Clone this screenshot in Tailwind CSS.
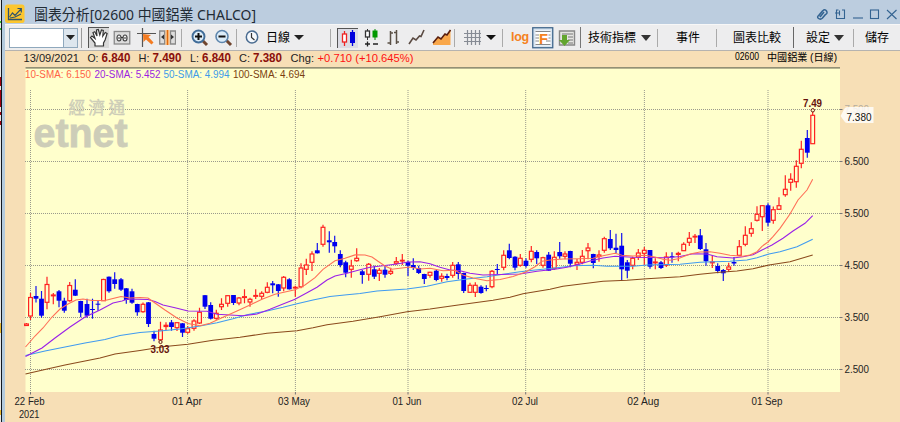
<!DOCTYPE html>
<html lang="zh-Hant">
<head>
  <meta charset="UTF-8">
  <meta name="viewport" content="width=device-width, initial-scale=1.0">
  <title>圖表分析[02600 中國鋁業 CHALCO]</title>
  <script src="https://cdn.jsdelivr.net/npm/@tailwindcss/browser@4"></script>
</head>
<body class="w-[900px] h-[422px] overflow-hidden flex bg-[#bccddf] font-['Liberation_Sans','Noto_Sans_CJK_TC',sans-serif] text-[#1c1c1c]">
  <!-- Edge of the window behind -->
  <div class="w-[5px] h-full shrink-0 flex">
    <svg class="w-[2px] h-full" viewBox="0 0 2 422">
      <rect width="2" height="422" fill="#e8e8e8"/>
      <path d="M0 22h1M0 29h1" stroke="#30c030" stroke-width="2"/>
      <path d="M0 77v9M0 90v17M0 112v3M0 121v4" stroke="#a00010" stroke-width="2"/>
      <path d="M0 323v10M0 410v5" stroke="#e8b830" stroke-width="2"/>
      <rect x="1" width="1" height="422" fill="#111820"/>
    </svg>
    <div class="w-[3px] bg-[#b3cadd]"></div>
  </div>

  <main class="flex-1 min-w-0 flex flex-col">
    <!-- Title bar -->
    <header class="h-[24px] shrink-0 flex items-center bg-[#bccddf]">
      <svg class="w-5 h-5 shrink-0 mt-[3px]" viewBox="0 0 20 20">
        <rect x="0" y="0.5" width="19.5" height="18.5" rx="2.5" fill="#fcc62e"/>
        <path d="M3.500 4v11.500H17" fill="none" stroke="#31536b" stroke-width="1.300"/>
        <path d="M4.500 13l3-4 2.500 2.500 6-6.500M12.500 4.500h3.800v4M5 14l5-1 6-3" fill="none" stroke="#31536b" stroke-width="1.200"/>
      </svg>
      <h1 class="ml-[10px] w-[226px] h-6">
        <svg class="w-[226px] h-6 block" viewBox="0 0 226 24"><text x="-1" y="19.500" font-size="14.500" textLength="222" lengthAdjust="spacingAndGlyphs" fill="#222b35" class="font-['Noto_Sans','Noto_Sans_CJK_TC',sans-serif]">圖表分析[02600 中國鋁業 CHALCO]</text></svg>
      </h1>
      <svg class="ml-auto mr-[2px] mt-[3px] w-[82px] h-5" viewBox="816 3 82 20" fill="none" stroke="#336391" stroke-width="1.100">
        <path d="M818.500 15l4-5q2.500-2.500 4 0t-1 3.500l-3 3.500q-2 2-4 .5t.5-3.500l3.500-4M820 16l4-5" stroke-width="1.500"/>
        <path d="M838.500 9h-2v8.500h8v-8.500h-2.500M835 12h5M839.500 9.500v5"/>
        <path d="M853 17h10"/>
        <rect x="870.500" y="9" width="8" height="8.500"/>
        <path d="M887 9l9.500 9M896.500 9l-9.500 9"/>
      </svg>
    </header>

    <!-- Toolbar -->
    <nav class="h-[27px] shrink-0 flex items-center bg-[#ededee] border-t border-[#f7f7f7] border-b border-b-[#b5b3b0] text-[12px] leading-none text-black whitespace-nowrap">
      <div class="ml-[4px] w-[69px] h-[20px] shrink-0 flex border border-[#8fa8bd] bg-white">
        <div class="w-[54px] border-r border-[#8fa8bd]"></div>
        <div class="flex-1 flex items-center justify-center bg-[#dde6ee]"><svg class="w-[9px] h-[5px]" viewBox="0 0 9 5"><path d="M0 0h9L4.500 5z" fill="#222"/></svg></div>
      </div>
      <div class="ml-[3px] w-px h-5 bg-[#999]"></div>

      <!-- hand -->
      <div class="ml-[6px] w-[21px] h-[21px] shrink-0 border-t border-l border-[#555] bg-[#d8d8d8]">
        <svg class="w-5 h-5" viewBox="0 0 20 20"><path d="M6 18v-3L1.500 9.500 3 8l3 2.500L4 4.500l1.800-.8L8 8 7.500 2 9.300 1.500 10.800 7 12.500 2l1.800.5-.5 5.500 2.500-3.500 1.800 1-2 6.500-1.600 3v3z" fill="#fff" stroke="#333" stroke-width="1.200"/></svg>
      </div>
      <svg class="ml-[4px] w-[18px] h-[16px] shrink-0" viewBox="0 0 18 16"><rect x="1.250" y="1.500" width="15.500" height="12.500" fill="#ddd" stroke="#8a8a8a" stroke-width="1.300"/><ellipse cx="6" cy="8" rx="2" ry="3" fill="#f4f4f4" stroke="#444" stroke-width="1.200"/><ellipse cx="12" cy="8" rx="2" ry="3" fill="#f4f4f4" stroke="#444" stroke-width="1.200"/><path d="M8 7.500h2M6 7v2M12 7v2" stroke="#333"/></svg>
      <svg class="ml-[6px] w-[19px] h-[20px] shrink-0" viewBox="0 0 19 20"><path d="M0 5.500h19M5.500 0v19" stroke="#555" stroke-width="1.200"/><path d="M6 6l8 1-2.500 2 5 5.500-2 2-5.500-5-2.500 2.500z" fill="#f47b20"/></svg>
      <svg class="ml-[3px] w-[17px] h-[17px] shrink-0" viewBox="0 0 17 17"><path d="M.7 2h5v13h-5zM11.500 2h5v13h-5z" fill="#ddd" stroke="#888" stroke-width="1.300"/><path d="M6.500 1h4v15h-4z" fill="#f7b36f"/><path d="M8.500 1v15" stroke="#e06a10"/><path d="M5 5.500v5l-3-2.500zM12 5.500v5l3-2.500z" fill="#333"/></svg>
      <div class="ml-[5px] w-px h-[18px] bg-[#aaa]"></div>

      <svg class="ml-[9px] w-[18px] h-[18px] shrink-0" viewBox="0 0 18 18"><path d="M11 11l5 5" stroke="#70452e" stroke-width="3"/><circle cx="7.500" cy="7.500" r="6" fill="#dcecf8" stroke="#416d99" stroke-width="1.900"/><path d="M4 7.500h7M7.500 4v7" stroke="#111" stroke-width="2"/></svg>
      <svg class="ml-[6px] w-[18px] h-[18px] shrink-0" viewBox="0 0 18 18"><path d="M11 11l5 5" stroke="#70452e" stroke-width="3"/><circle cx="7" cy="7.500" r="6" fill="#dcecf8" stroke="#5e86ad" stroke-width="1.600"/><path d="M3.500 7.500h7" stroke="#111" stroke-width="2"/></svg>
      <div class="ml-[3px] w-px h-[18px] bg-[#aaa]"></div>
      <svg class="ml-[8px] w-[14px] h-[15px] shrink-0" viewBox="0 0 14 15"><ellipse cx="7" cy="7" rx="5.700" ry="6" fill="#f5f8fc" stroke="#4a6c91" stroke-width="1.500"/><path d="M6.500 3v4.500l3 2.500" fill="none" stroke="#333" stroke-width="1.200"/></svg>
      <span class="ml-[7px] w-[24px]">日線</span>
      <svg class="ml-[4px] w-[10px] h-[5px] shrink-0" viewBox="0 0 10 5"><path d="M0 0h10L5 5z" fill="#222"/></svg>
      <div class="ml-[26px] w-px h-[18px] bg-[#aaa]"></div>

      <!-- chart types -->
      <div class="ml-[6px] w-[21px] h-[20px] shrink-0 border-t border-l border-[#555] bg-[#dcdce4]">
        <svg class="w-5 h-[19px]" viewBox="0 0 20 19"><path d="M6.500 2v15" stroke="#e22" stroke-width="1.300"/><rect x="4.500" y="5" width="4" height="8" fill="#fff" stroke="#e22" stroke-width="1.300"/><path d="M14.500 1v16" stroke="#00d" stroke-width="1.300"/><path d="M12 3h5v11h-5z" fill="#00d"/></svg>
      </div>
      <svg class="ml-[6px] w-[15px] h-[19px] shrink-0" viewBox="0 0 15 19"><path d="M3.500 1v11" stroke="#333"/><rect x="1.500" y="3" width="4" height="6" fill="#fff" stroke="#333" stroke-width="1.300"/><path d="M11 1v11" stroke="#080"/><path d="M8.500 2.500h5v7h-5z" fill="#090"/><path d="M1 16h5M3.500 13.500v5M9 16h5" stroke="#222" stroke-width="1.300"/></svg>
      <svg class="ml-[8px] w-[13px] h-[18px] shrink-0" viewBox="0 0 13 18"><path d="M3.500 2v14M.5 14h3M3.500 4h2.500M9.500 1v14M7 3.500h2.500M9.500 13H12" stroke="#5a5045" stroke-width="1.500"/></svg>
      <svg class="ml-[8px] w-[17px] h-[17px] shrink-0" viewBox="0 0 17 17"><path d="M1 15l4-6 3 2 3.500-4 1.500.5L16 1" fill="none" stroke="#5a4a42" stroke-width="1.600"/></svg>
      <svg class="ml-[7px] w-[19px] h-[17px] shrink-0" viewBox="0 0 19 17"><path d="M1 13l5-5 3 2 4-5 2 1 3.500-5v15H1z" fill="#f9a74a"/><path d="M1 14l5-6 3 2 4-5 2 1 3.500-5" fill="none" stroke="#5a2010" stroke-width="1.600"/></svg>
      <div class="ml-[3px] w-px h-[18px] bg-[#aaa]"></div>
      <svg class="ml-[9px] w-[17px] h-[17px] shrink-0" viewBox="0 0 17 17"><path d="M0 4.500h17M0 8.500h17M0 12.500h17M3.500 1v15M7.500 1v15M11.500 1v15M15.500 1v15" stroke="#868b94" stroke-width="1.200"/></svg>
      <svg class="ml-[5px] w-[10px] h-[5px] shrink-0" viewBox="0 0 10 5"><path d="M0 0h10L5 5z" fill="#111"/></svg>
      <div class="ml-[6px] w-px h-[18px] bg-[#aaa]"></div>
      <span class="ml-[8px] w-[19px] text-[12.5px] font-bold tracking-[-0.3px] text-[#f58220]">log</span>
      <svg class="ml-[2px] w-[22px] h-[22px] shrink-0" viewBox="0 0 22 22"><rect x=".75" y=".75" width="20" height="20" fill="#d8e4f0" stroke="#40678c" stroke-width="1.300"/><path d="M3.500 3.500h15v15h-15z" fill="#fff"/><path d="M3.500 4.500h15M3.500 8h3.500M3.500 11h3.500M3.500 14h3.500M3.500 17.500h15M16.500 8h2M16.500 11h2M14 14h4.500" stroke="#888"/><text x="7" y="16.500" font-size="15" font-weight="bold" fill="#f58220" textLength="9" lengthAdjust="spacingAndGlyphs">F</text></svg>
      <svg class="ml-[4px] w-[19px] h-[18px] shrink-0" viewBox="0 0 19 18"><path d="M1.500 2h15v14h-15z" fill="#e5e5e2" stroke="#888" stroke-width="1.400"/><path d="M4 5h11M10 8h5M10 11h5M10 14h5" stroke="#777"/><path d="M4 6h5v5h3l-5.500 6L1 11h3z" fill="#62a52e"/></svg>
      <div class="ml-[3px] w-px h-[21px] bg-[#777]"></div>

      <!-- menus -->
      <span class="ml-[7px] w-[49px]">技術指標</span>
      <svg class="ml-[4px] w-[10px] h-[6px] shrink-0" viewBox="0 0 10 6"><path d="M0 0h10L5 6z" fill="#333"/></svg>
      <div class="ml-[6px] w-px h-[18px] bg-[#aaa]"></div>
      <span class="ml-[18px] w-[24px]">事件</span>
      <div class="ml-[16px] w-px h-[18px] bg-[#aaa]"></div>
      <span class="ml-[16px] w-[48px]">圖表比較</span>
      <div class="ml-[12px] w-px h-[21px] bg-[#666]"></div>
      <span class="ml-[12px] w-[24px]">設定</span>
      <svg class="ml-[4px] w-[10px] h-[6px] shrink-0" viewBox="0 0 10 6"><path d="M0 0h10L5 6z" fill="#333"/></svg>
      <div class="ml-[9px] w-px h-[18px] bg-[#aaa]"></div>
      <span class="ml-[11px] w-[24px]">儲存</span>
    </nav>

    <!-- Chart: the viewBox keeps window coordinates -->
    <svg id="chart" class="w-[895px] h-[371px] shrink-0 block bg-[#f7dfb6]" viewBox="5 51 895 371" font-size="10.500">
      <rect x="25.500" y="67" width="814.500" height="325" fill="#ffffcc"/>
      <path d="M25.500 67.900H840" stroke="#6f6b59" stroke-width="1.300"/>

      <g font-size="11" fill="#222">
        <text x="23.500" y="62" textLength="55.500" lengthAdjust="spacingAndGlyphs">13/09/2021</text>
        <text x="87.500" y="62" textLength="11" lengthAdjust="spacingAndGlyphs">O:</text>
        <text x="138.500" y="62" textLength="11" lengthAdjust="spacingAndGlyphs">H:</text>
        <text x="190" y="62" textLength="9" lengthAdjust="spacingAndGlyphs">L:</text>
        <text x="239" y="62" textLength="11" lengthAdjust="spacingAndGlyphs">C:</text>
        <text x="290.500" y="62" textLength="23.500" lengthAdjust="spacingAndGlyphs">Chg:</text>
        <text x="317.500" y="62" fill="#f11" textLength="96" lengthAdjust="spacingAndGlyphs">+0.710 (+10.645%)</text>
        <g fill="#8b0f0b" font-weight="bold" font-size="12">
          <text x="101.500" y="62" textLength="29" lengthAdjust="spacingAndGlyphs">6.840</text>
          <text x="152.500" y="62" textLength="29" lengthAdjust="spacingAndGlyphs">7.490</text>
          <text x="202" y="62" textLength="29" lengthAdjust="spacingAndGlyphs">6.840</text>
          <text x="253" y="62" textLength="29" lengthAdjust="spacingAndGlyphs">7.380</text>
        </g>
        <g font-size="10" fill="#000">
          <text x="735" y="60" textLength="24" lengthAdjust="spacingAndGlyphs">02600</text>
          <text x="767" y="60.500" textLength="70" lengthAdjust="spacingAndGlyphs">中國鋁業 (日線)</text>
        </g>
      </g>
      <g font-size="10">
        <text x="25" y="77.500" fill="#ff6347" textLength="66" lengthAdjust="spacingAndGlyphs">10-SMA: 6.150</text>
        <text x="94.500" y="77.500" fill="#9a1fe0" textLength="66" lengthAdjust="spacingAndGlyphs">20-SMA: 5.452</text>
        <text x="163.500" y="77.500" fill="#409be8" textLength="66" lengthAdjust="spacingAndGlyphs">50-SMA: 4.994</text>
        <text x="233" y="77.500" fill="#7b3f10" textLength="72" lengthAdjust="spacingAndGlyphs">100-SMA: 4.694</text>
      </g>

      <g id="grid" stroke="#9a9a8c" stroke-width="1" stroke-dasharray="1 1"></g>

      <!-- etnet watermark -->
      <g fill="#cdcdb8">
        <text x="68.500" y="114" font-size="16.500" stroke="#cdcdb8" stroke-width=".4" textLength="56.500">經濟通</text>
        <text x="33.500" y="147.300" font-size="41" font-weight="bold" stroke="#cdcdb8" stroke-width=".8" textLength="94" lengthAdjust="spacingAndGlyphs">etnet</text>
      </g>

      <g id="candles"></g>
      <g id="averages" fill="none" stroke-width="1.100"></g>
      <g id="axis" fill="#222"></g>

      <text x="150.500" y="353" font-weight="bold" fill="#65120c" textLength="19" lengthAdjust="spacingAndGlyphs">3.03</text>
      <circle cx="160.500" cy="342" r="1.600" fill="#ffffcc" stroke="#65120c"/>
      <text x="803" y="107" font-weight="bold" fill="#65120c" textLength="19" lengthAdjust="spacingAndGlyphs">7.49</text>
      <circle cx="812.800" cy="110.300" r="1.700" fill="#ffffcc" stroke="#65120c"/>
      <path d="M840.500 116l4-7.500q1-1.500 3-1.500H873.500V123H847.500q-2 0-3-1.500z" fill="#fff" fill-opacity=".8"/>
      <text x="846.500" y="121" textLength="25" lengthAdjust="spacingAndGlyphs" fill="#111">7.380</text>
    </svg>
  </main>

  <script>
    const NS = "http://www.w3.org/2000/svg";

    function add(parent, tag, attrs, text) {
      const el = document.createElementNS(NS, tag);
      for (const k in attrs) el.setAttribute(k, attrs[k]);
      if (text) el.textContent = text;
      document.getElementById(parent).appendChild(el);
    }

    // [y, label]
    const prices = [[109.5, "7.500"], [161.5, "6.500"], [213.5, "5.500"], [265.5, "4.500"], [317.5, "3.500"], [369.5, "2.500"]];
    prices.forEach(([y, label]) => {
      add("grid", "path", { d: `M25 ${y}H840` });
      add("axis", "path", { d: `M840 ${y}h2.500`, stroke: "#777" });
      add("axis", "text", { x: 844.5, y: y + 3.5, textLength: 24.5, lengthAdjust: "spacingAndGlyphs", fill: label === "7.500" ? "#b5ada0" : "#222" }, label);
    });

    // [x, label, label x, width]
    const dates = [[30.5, "22 Feb", 14.5, 30], [187.6, "01 Apr", 172, 30], [295.4, "03 May", 278, 32], [408, "01 Jun", 392.5, 29], [525.7, "02 Jul", 512, 26], [644.4, "02 Aug", 627.3, 32], [768, "01 Sep", 751.5, 31]];
    dates.forEach(([x, label, lx, w]) => {
      add("grid", "path", { d: `M${x} 90V392` });
      add("axis", "path", { d: `M${x} 392v2.500`, stroke: "#777" });
      add("axis", "text", { x: lx, y: 405, textLength: w, lengthAdjust: "spacingAndGlyphs" }, label);
    });
    add("axis", "text", { x: 19, y: 417.5, textLength: 20.5, lengthAdjust: "spacingAndGlyphs" }, "2021");

    // [x, high, body top, body bottom, low, up?]
    const candles = [
      [26.5,323,324,325.5,326,1],[30.5,293,297.5,316,320,1],[36,286,296,298.7,302.6,0],[41.5,291,298.7,315.7,317.7,0],
      [47,276.7,284.5,302.3,309.3,1],[53.3,293,295,295.8,304.3,1],[59,290,291.3,300.7,307.3,0],[64.3,297.7,300.7,310.7,312.7,0],
      [69.7,282,285.5,300.7,301.7,1],[75.3,279.3,289.7,295.7,296,0],[80.7,300.7,301,312.7,317.3,0],[87,298.7,304,315.7,317.7,0],
      [92.5,298.7,309,310,318.7,0],[98,301,303.7,304.7,310.7,0],[103.5,278.7,279.5,300.7,301,1],[109,276.5,276.7,291.3,292.7,0],
      [114.7,272.3,279.3,284,288.7,0],[121,278,279.3,289.7,291,0],[126.3,288,288.3,300,303.7,0],[132,288.7,291.3,302.7,303.7,0],
      [137.3,303.7,304,312.3,315.7,0],[143,302.5,304.3,311.7,312.7,1],[148.5,302,302.3,324,327,0],[154,330.7,334,338.7,341.3,0],
      [160.5,321.7,330,339.7,341,1],[166,322.3,325.3,326.5,330.3,1],[171.5,320,322.3,327,330.7,0],[177,322,322.7,327.7,331,1],
      [182.5,323,323.3,332.7,337,0],[187.7,326,328.7,332.3,333.7,1],[194,319.3,321,328.3,330.7,1],[199.5,307.7,312.3,323,324,1],
      [205,295,295.2,306.7,309,0],[210.7,302.3,305,318.7,319.5,0],[216.3,309.7,313.3,318.3,319.7,1],[221.5,298.3,304.3,306.7,310,1],
      [227.7,295.3,295.7,303.3,306.7,1],[233.5,295,295,303,305,0],[239,297,298,303,305.3,1],[244.5,289.3,296.7,297.5,303.3,1],
      [250,297.7,299.3,302,306.7,1],[255.7,289.3,295.5,296.3,299,1],[261.7,291.3,293.3,296.3,299.3,1],[267.3,282.3,287.3,292.3,293.3,1],
      [272.7,281,283.3,285.3,293.3,0],[278.3,284,284.3,291,296.7,0],[283.7,276,277.3,288,291.3,1],[289.3,278.3,279.3,289.3,289.5,0],
      [295.3,285.7,287.3,288,296.7,1],[301,263.3,268,286.7,288.3,1],[306.3,258.7,265,269.3,275,1],[312,251.3,254,262.3,271,1],
      [317.3,243,250.3,253.3,253.6,0],[323,224.7,227.3,244.3,246.7,1],[329.3,231.3,240.3,242.3,252.7,0],[334.7,235.7,242,246.3,252.7,0],
      [340.3,250.3,254,265,267.3,0],[345.7,260.7,262.3,272.7,277.3,0],[351.3,259.7,266,269.3,277.7,1],[356.7,248.3,258.3,260.7,261.7,1],
      [362.3,270,271.3,275,283.7,0],[368.7,263,264.3,274.3,280.7,1],[374.3,265.7,269.3,276.7,279,0],[379.3,268,270.3,273.3,281,1],
      [385,265.3,269.7,274.7,277.7,0],[390.7,267.7,271.3,273.3,275,1],[396.3,257,261.7,263.3,264.7,1],[402.3,254,260.3,261,265,1],
      [408,260.7,262,265.7,276,0],[413.3,258.3,265,268,270,0],[418.7,265.7,268,273,274,0],[424.3,273.7,274,279,284,0],
      [430,271.7,272.3,275.3,277.7,1],[436.3,270,270.7,280,281.3,0],[441.7,273.3,276.3,278.3,281.7,1],[447,273.7,276,278,280.3,0],
      [452.7,262,265.3,275.3,277.7,1],[458.3,262,264.3,274,279.3,0],[463.7,272.7,273,291,293,0],[470,282.7,285.3,292.3,293,1],
      [475.3,282.3,285.3,292.3,297,1],[481,285.3,286.7,293,293.7,0],[486.3,285.3,288,289,291.3,0],[492,270,271.3,286.7,288.3,1],
      [497.3,264,269,270,274,0],[503.7,250.3,255.3,267.3,270.3,1],[509.3,243.7,250.3,258,259.3,0],[515,256.3,256.7,267.7,270.3,0],
      [520.3,254,258.3,265.3,266.7,1],[526,258.3,260.7,266,267.7,0],[531.3,246,251.3,259.3,262.3,1],[536.7,250.3,252,258.3,264,0],
      [543,256.7,257.7,265.3,267.7,1],[548.7,252,254.7,270.7,271,0],[554.3,251.3,257.3,268.3,270,1],[559.7,242,252,256.3,258.7,0],
      [565,251.3,254,256.3,259.3,1],[570.3,250.7,251,263.7,267.3,0],[577,259,262.3,264.3,270,1],[582.3,250,256.3,262.3,264.3,1],
      [588,243,248,250.7,259.3,1],[593.3,253.7,254,263,268.3,0],[599,250.3,255,256.5,261.7,1],[604.3,236.7,238.7,250.3,252.7,1],
      [610.3,230,239,248.3,250,0],[616,233.7,247.7,250,253.3,0],[621.7,233,245.7,269.3,280.3,0],[627.3,260,262.3,270.7,278.3,0],
      [632.7,256.7,258.3,265.3,269.3,1],[638.3,249,253,257,260,1],[644.3,247,250.3,253.3,265,1],[650,250,250,266.7,268.7,0],
      [655.3,258.3,262,262.8,269.3,1],[661,261,262.3,268,269,0],[666.3,252.3,257,265,267,1],[672,252.3,256.2,257.2,262.7,0],
      [678.3,251.7,253.4,254.4,261.3,1],[683.7,242.3,244.3,250.7,251,1],[689.3,232,238.3,242.3,246,1],[695,234,236.3,237,243,1],
      [700.3,229,235.3,249,250,0],[706,243,249.3,261.3,265.7,0],[712.3,255.3,262,262.8,268,1],[717.7,263.3,266,271,273.3,0],
      [723.3,269,270,273.3,281,0],[728.7,262.7,267,269.3,271.7,1],[734,257,262,263.5,265.7,0],[739.3,240,246.7,255.3,256,1],
      [745.3,226.3,235.3,244.3,246.3,1],[751.3,222.3,228.7,233.3,236.7,1],[757,206.3,214.3,220.3,221.5,1],[762.3,205,205.7,216.7,231,1],
      [768,203.3,205.3,222.7,226.3,0],[773.3,206.5,209.7,220.3,223.7,1],[779,197.3,205.7,209.3,210,1],[785.3,175.3,189.3,194.7,196.7,1],
      [790.7,173.3,179.3,182.3,190.7,1],[796.3,160.3,166.3,181.7,187.7,1],[801.3,140.7,149.3,163.3,168.3,1],[807.3,130,138,152.7,157.7,0],
      [812.7,110.7,115.3,143.7,144,1]
    ];
    candles.forEach(([x, hi, top, bottom, lo, up]) => {
      if (up) {
        add("candles", "path", { d: `M${x} ${hi}V${top}M${x} ${bottom}V${lo}`, stroke: "#f22", "stroke-width": 1.2 });
        add("candles", "rect", { x: x - 1.9, y: top, width: 3.8, height: bottom - top, fill: "#ffffcc", stroke: "#f22", "stroke-width": 1.2 });
      } else {
        add("candles", "path", { d: `M${x} ${hi}V${lo}`, stroke: "#11e", "stroke-width": 1.2 });
        add("candles", "rect", { x: x - 2.4, y: top, width: 4.8, height: bottom - top, fill: "#0000f0" });
      }
    });

    const averages = {
      "#8b4a1c": "25.5,374 45,369.5 65,365 85,361 100,358 115,354 140,350.5 165,346.5 188,344.3 213,340.3 240,337.3 267,333.3 297,330.7 313,327.7 327,324.7 353,321.3 380,316.7 407,311.7 430,309 460,304.7 493,300.3 510,297.3 523,293.7 550,289.3 563,286.3 583,283.7 603,281.3 627,280.3 647,278.7 680,276.7 700,274.3 720,272.3 737,271 753,268.7 769,265 790,261.7 812.7,255",
      "#409bf0": "25.5,355.5 45,351 65,347 85,343 105,339.5 120,335.5 140,332.5 160,331 180,329 200,326 217,322.7 233,318.7 247,314.7 267,311 283,307.3 297,303.7 313,300 330,296.5 347,294.7 360,293.5 377,291 407,289 427,286.3 447,281.7 467,279 487,276.7 503,274.3 520,271.7 533,270.3 557,267.7 573,265.7 593,265.3 607,266.3 633,266.3 647,265 680,264.3 700,262.3 730,261.3 747,260 757,257.7 769,254 780,251.7 797,246.7 812.7,239.3",
      "#9a20e8": "25.5,356.5 42,348 55,338 70,327 85,317 100,310 113,303 122,301 128,299 148,299.5 155,301.5 163,305 175,307.7 188,311 207,311.3 217,314.3 243,315.7 257,314 270,309.3 283,304 295,299.3 307,292.7 317,287.3 327,280 335,276 347,273.3 360,269.8 370,267.3 383,265.7 397,264 408,262 420,261.7 430,263.7 440,267.3 450,270 460,270.7 470,273.3 483,275 520,274 537,271.3 555,269.3 567,267.3 580,264 590,261 603,258 615,256.3 633,257.3 667,257.7 680,256.5 693,253.7 707,254 717,256.7 733,258 743,256.7 753,254.7 762,250 772,245 783,238.3 793,231 805,223.3 812.7,215.7",
      "#ff7058": "25.5,347 35,336 43,328 52,317 60,309 68,304 76,300 83,299 92,300.5 105,300.5 115,298 121,296.5 130,298 140,297.5 148,298 155,303 165,310 177,318 188,323.5 200,325.7 210,323.3 223,317.3 237,311 250,305 262,299.3 275,294.3 295,289.7 305,285 315,277.7 323,269.3 335,260.7 345,258.3 355,254.9 365,255 372,257 378,261.3 385,266 392,269.3 400,268.3 410,267 420,269 430,268.3 443,270.7 455,270.3 463,275 473,278 487,280.7 500,279.5 513,276.5 525,272.3 535,266.7 542,261.3 550,260 563,259 580,258.7 593,258.3 603,255.7 615,253.3 622,255.3 633,256 645,255.3 655,257 663,259.3 670,260.3 678,258.7 690,254 700,252 710,251.7 720,253.3 730,255.3 743,256.3 750,255 757,251.7 762,246.3 768,242 773,236.7 780,228.3 790,214 798,200 807,190 812.7,179.3"
    };
    for (const color in averages) {
      add("averages", "polyline", { points: averages[color], stroke: color });
    }
  </script>
</body>
</html>
